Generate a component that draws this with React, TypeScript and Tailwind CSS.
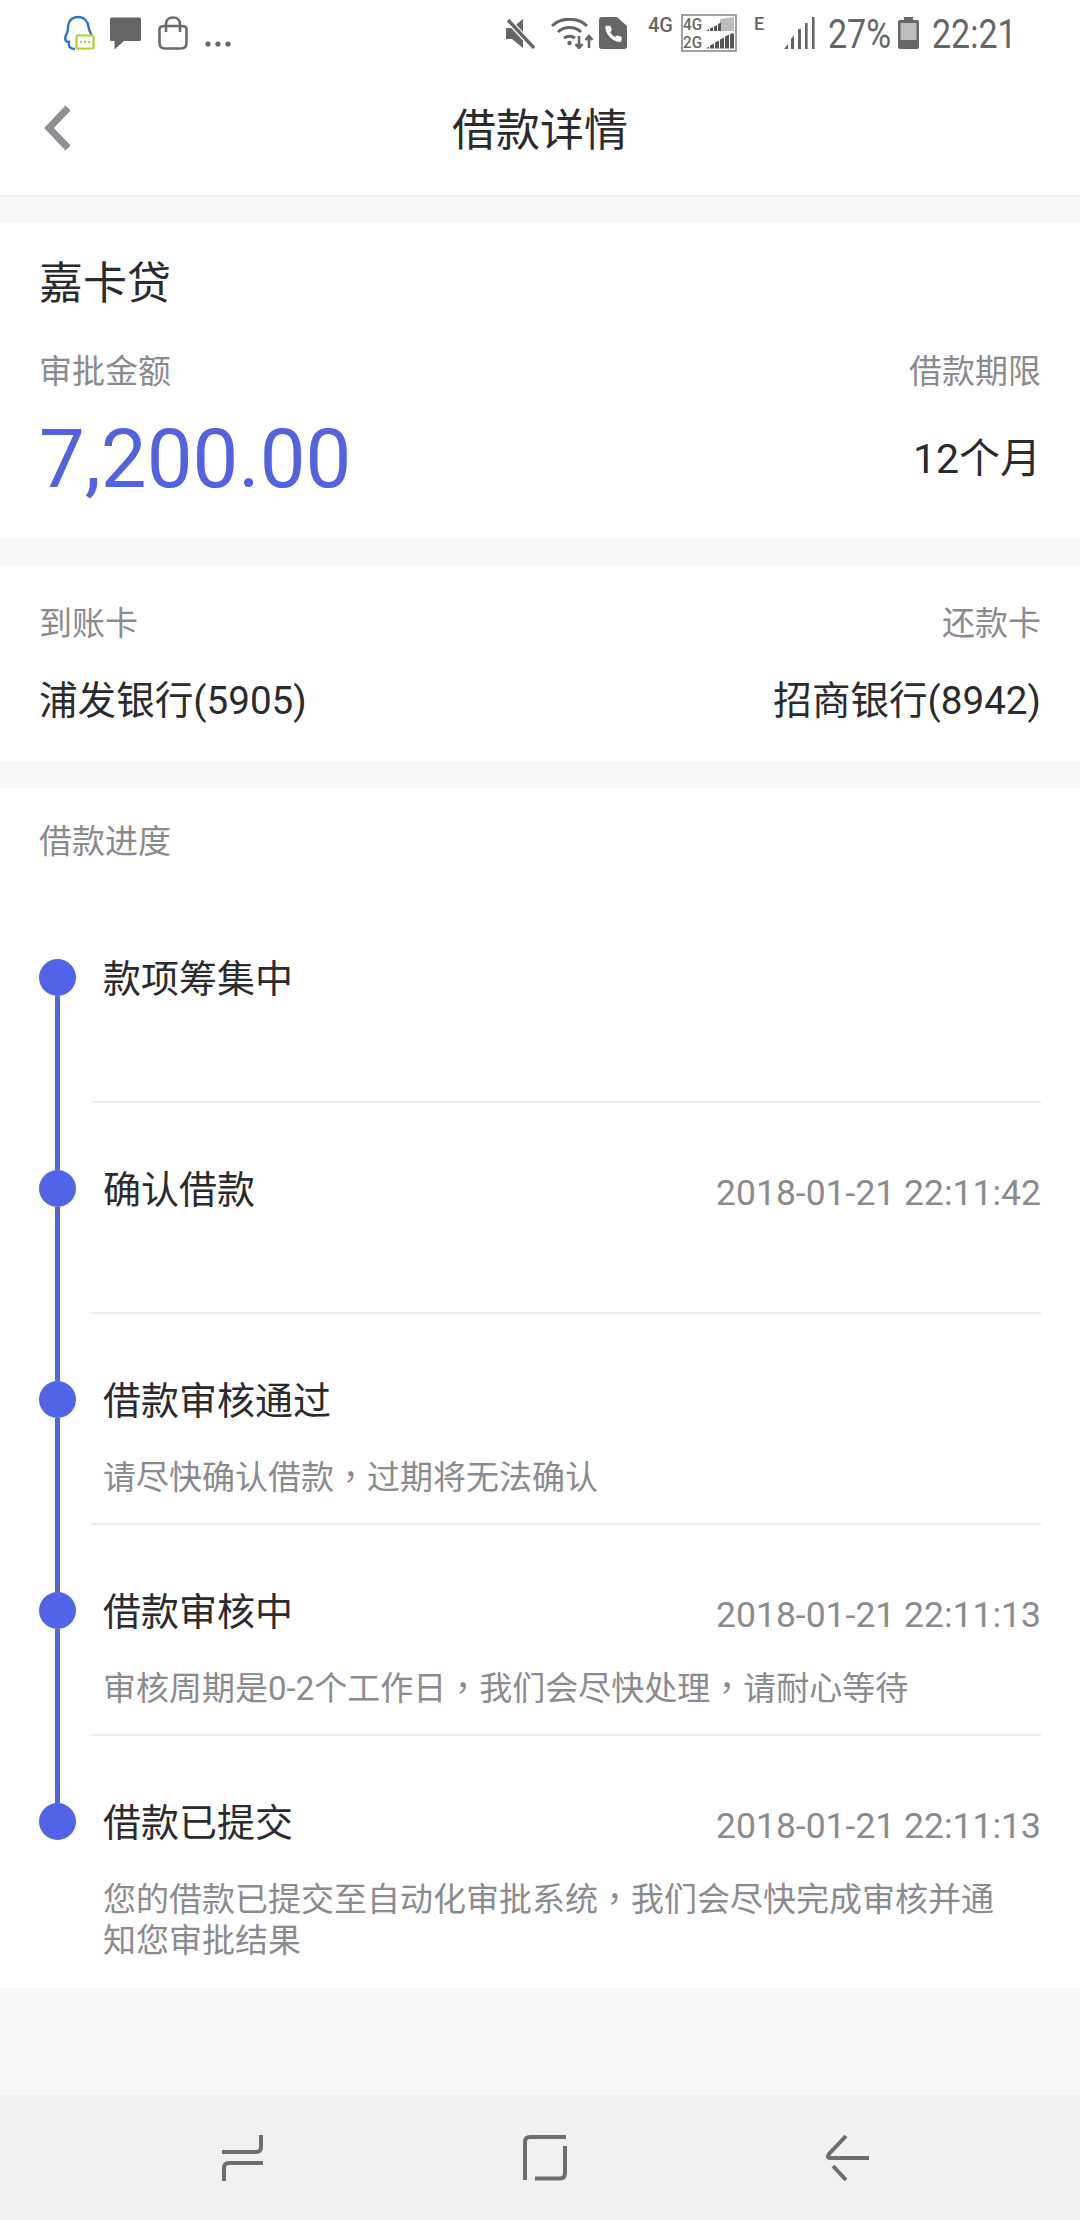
import React from "react";

const FONT = "font-['Roboto','Noto_Sans_CJK_SC',sans-serif]";

function QQ() {
  return (
    <svg width="32" height="36" viewBox="0 0 32 36" className="ml-[63px]" fill="none">
      <path d="M12 34C7 34 5 31 6 27C3 27 1 25 3 20C5 17 5 15 5 11C6 5 10 2 15 2C21 2 25 6 25.5 12C26 15 27 17 28.5 20" stroke="#2a74d8" strokeWidth="2.4" />
      <rect x="13.5" y="20.5" width="17" height="13" rx="1.5" fill="#fff" stroke="#b5cf2f" strokeWidth="2.2" />
      <path d="M19 33l2 2.5 2-2.5z" fill="#b5cf2f" />
      <circle cx="18" cy="27" r="1.2" fill="#b5cf2f" />
      <circle cx="22" cy="27" r="1.2" fill="#b5cf2f" />
      <circle cx="26" cy="27" r="1.2" fill="#b5cf2f" />
    </svg>
  );
}

function Message() {
  return (
    <svg width="31" height="33" viewBox="0 0 31 33" className="ml-[15px]">
      <path d="M1.5 0.5H29.5A1.5 1.5 0 0 1 31 2V22.5A1.5 1.5 0 0 1 29.5 24H14L4.5 32.5V24H1.5A1.5 1.5 0 0 1 0 22.5V2A1.5 1.5 0 0 1 1.5 0.5Z" fill="#666" />
    </svg>
  );
}

function Bag() {
  return (
    <svg width="30" height="34" viewBox="0 0 30 34" className="ml-[17px]" fill="none" stroke="#6a6a6a" strokeWidth="2.6">
      <path d="M8 10H6.5C3.5 10 1.5 11 1.5 13V27C1.5 30.5 3.5 32.5 7 32.5H23C26.5 32.5 28.5 30.5 28.5 27V13C28.5 11 26.5 10 23.5 10H22" />
      <path d="M8 16V8C8 4 11 1.5 15 1.5C19 1.5 22 4 22 8V16M8 10H22" />
    </svg>
  );
}

function Dots() {
  return (
    <svg width="26" height="6" viewBox="0 0 26 6" className="ml-[17px] mt-[22px]" fill="#666">
      <circle cx="3" cy="3" r="2.6" />
      <circle cx="13" cy="3" r="2.6" />
      <circle cx="23" cy="3" r="2.6" />
    </svg>
  );
}

function Mute() {
  return (
    <svg width="30" height="31" viewBox="0 0 30 31">
      <path d="M1 10H7L18 1V30L7 21H1Z" fill="#666" />
      <path d="M2 1L29 30" stroke="#fff" strokeWidth="6" />
      <path d="M3 2L29 30" stroke="#666" strokeWidth="3.4" />
    </svg>
  );
}

function Wifi() {
  return (
    <svg width="44" height="31" viewBox="0 0 44 31" className="ml-[16px]" fill="none" stroke="#666">
      <path d="M1 8C10 -1 27 -1 36 8" strokeWidth="3" />
      <path d="M7 14C13 8 24 8 30 14" strokeWidth="3" />
      <path d="M13 20C16 17.5 21 17.5 24 20" strokeWidth="3" />
      <circle cx="18.5" cy="25" r="2.2" fill="#666" stroke="none" />
      <path d="M28 18V30M24.5 26L28 30L31.5 26" strokeWidth="2.6" />
      <path d="M38 30V18M34.5 22L38 18L41.5 22" strokeWidth="2.6" />
    </svg>
  );
}

function CallSim() {
  return (
    <svg width="28" height="32" viewBox="0 0 28 32" className="ml-[4px]">
      <path d="M3 0H18L28 9V29A3 3 0 0 1 25 32H3A3 3 0 0 1 0 29V3A3 3 0 0 1 3 0Z" fill="#666" />
      <g transform="translate(4.5 7) scale(0.82)">
        <path d="M22 16.92v3a2 2 0 0 1-2.18 2 19.79 19.79 0 0 1-8.63-3.07 19.5 19.5 0 0 1-6-6 19.79 19.79 0 0 1-3.07-8.67A2 2 0 0 1 4.11 2h3a2 2 0 0 1 2 1.72 12.84 12.84 0 0 0 .7 2.81 2 2 0 0 1-.45 2.11L8.09 9.91a16 16 0 0 0 6 6l1.27-1.27a2 2 0 0 1 2.11-.45 12.84 12.84 0 0 0 2.81.7A2 2 0 0 1 22 16.92z" fill="#fff" />
      </g>
    </svg>
  );
}

function SimBox() {
  return (
    <svg width="56" height="38" viewBox="0 0 56 38" className="ml-[9px]">
      <rect x="1" y="1" width="54" height="36" fill="#fff" stroke="#8a8a8a" strokeWidth="1.6" />
      <text x="2" y="16" fontSize="17" fontWeight="500" fill="#666" fontFamily="Roboto" textLength="19" lengthAdjust="spacingAndGlyphs">4G</text>
      <text x="2" y="34" fontSize="17" fontWeight="500" fill="#666" fontFamily="Roboto" textLength="19" lengthAdjust="spacingAndGlyphs">2G</text>
      <path d="M25 17H39V5L53 3V17Z" fill="#bdbdbd" />
      <path d="M25 17L28 15V17ZM29 17V14.5L32 13V17ZM33 17V12.5L36 11V17ZM37 17V10L40 8.5V17Z" fill="#555" />
      <path d="M25 34.5L28 32.5V34.5ZM29 34.5V31.5L33 29.5V34.5ZM34 34.5V28.5L38 26.5V34.5ZM39 34.5V25.5L43 23.5V34.5ZM44 34.5V22.5L48 20.5V34.5ZM49 34.5V20L53 19V34.5Z" fill="#555" />
    </svg>
  );
}

function Signal() {
  return (
    <svg width="31" height="32" viewBox="0 0 31 32" className="ml-[21px]" fill="#666">
      <path d="M0 32L4 27V32Z" />
      <path d="M7 32V22L10 18V32Z" />
      <rect x="14" y="12" width="3" height="20" />
      <rect x="21" y="6" width="2.6" height="26" />
      <rect x="28" y="0" width="2.6" height="32" />
    </svg>
  );
}

function Battery() {
  return (
    <svg width="21" height="32" viewBox="0 0 21 32" className="ml-[10px]">
      <rect x="6" y="0" width="9" height="4" fill="#666" />
      <rect x="0" y="3" width="21" height="29" rx="2" fill="#666" />
      <rect x="2.5" y="6" width="16" height="17" fill="#bdbdbd" />
    </svg>
  );
}

function StatusBar() {
  return (
    <div className="flex h-[66px] items-center justify-between bg-white">
      <div className="flex items-center">
        <QQ />
        <Message />
        <Bag />
        <Dots />
      </div>
      <div className="flex items-center pr-[70px] text-[#666]">
        <Mute />
        <Wifi />
        <CallSim />
        <span className="ml-[21px] w-[24px] -translate-y-[8px] text-[20px] leading-[20px] font-medium whitespace-nowrap">4G</span>
        <SimBox />
        <span className="ml-[17px] w-[9px] -translate-y-[9px] text-[18px] leading-[20px] font-medium">E</span>
        <Signal />
        <span className="ml-[13px] mt-[3px] w-[60px] origin-left scale-x-[0.85] text-[40px] leading-[44px] whitespace-nowrap">27%</span>
        <Battery />
        <span className="ml-[13px] mt-[3px] w-[78px] origin-left scale-x-[0.85] text-[40px] leading-[44px] whitespace-nowrap">22:21</span>
      </div>
    </div>
  );
}

function Header() {
  return (
    <div className="grid h-[131px] grid-cols-[1fr_auto_1fr] items-center border-b-2 border-[#ededed] bg-white">
      <svg width="30" height="46" viewBox="0 0 30 46" className="ml-[43px] -mt-[6px]" fill="none">
        <path d="M25 3L6 23L25 43" stroke="#8e8e93" strokeWidth="7" />
      </svg>
      <div className="text-[44px] leading-[60px] text-[#2b2b2e]">借款详情</div>
      <div />
    </div>
  );
}

type Step = { title: string; time?: string; desc?: React.ReactNode };

const Comma = () => <span className="font-['Noto_Sans_CJK_TC']">，</span>;

const steps: Step[] = [
  { title: "款项筹集中" },
  { title: "确认借款", time: "2018-01-21 22:11:42" },
  { title: "借款审核通过", desc: <>请尽快确认借款<Comma />过期将无法确认</> },
  { title: "借款审核中", time: "2018-01-21 22:11:13", desc: <>审核周期是0-2个工作日<Comma />我们会尽快处理<Comma />请耐心等待</> },
  { title: "借款已提交", time: "2018-01-21 22:11:13", desc: <>您的借款已提交至自动化审批系统<Comma />我们会尽快完成审核并通<br />知您审批结果</> },
];

function TimelineRow({ step, first, last }: { step: Step; first: boolean; last: boolean }) {
  return (
    <div className="flex">
      <div className="flex w-[37px] shrink-0 flex-col items-center">
        <div className={`h-[67px] w-[5px] ${first ? "" : "bg-[#5266e0]"}`} />
        <div className="h-[37px] w-[37px] shrink-0 rounded-full bg-[#5163e6]" />
        <div className={`w-[5px] flex-1 ${last ? "" : "bg-[#5266e0]"}`} />
      </div>
      <div className={`ml-[16px] flex-1 pt-[61px] ${last ? "pb-[27px]" : "min-h-[211px] border-b-2 border-[#ededed]"}`}>
        <div className="flex items-center justify-between pl-[11px]">
          <span className="text-[38px] leading-[52px] text-[#2b2b2e]">{step.title}</span>
          {step.time && <span className="mt-[6px] text-[35.5px] leading-[46px] text-[#8b8b8f]">{step.time}</span>}
        </div>
        {step.desc && (
          <div className="mt-[28px] pl-[11px] pr-[40px] text-[33px] leading-[41px] text-[#8b8b8f]">{step.desc}</div>
        )}
      </div>
    </div>
  );
}

function NavBar() {
  return (
    <div className="flex h-[125px] items-center justify-center gap-[256px] bg-[#f1f1f1] pl-[9px]">
      <svg width="46" height="48" viewBox="0 0 46 48" fill="none" stroke="#6e6e6e" strokeWidth="4">
        <path d="M2 18H36C39.5 18 41 16 41 13V1" />
        <path d="M43 29H9C5.5 29 4 31 4 34V47" />
      </svg>
      <svg width="46" height="48" viewBox="0 0 46 48" fill="none" stroke="#6e6e6e" strokeWidth="4">
        <path d="M44 3H8C4.5 3 3 5 3 8V46" />
        <path d="M43 12V39C43 43 41 44.5 38 44.5H13" />
      </svg>
      <svg width="46" height="48" viewBox="0 0 46 48" fill="none" stroke="#6e6e6e" strokeWidth="4">
        <path d="M22 2L5 20C3 23 4 24 7 24H45" />
        <path d="M9 32L22 46" />
      </svg>
    </div>
  );
}

export default function App() {
  return (
    <div className={`${FONT} flex h-[2220px] w-[1080px] flex-col overflow-hidden bg-[#f7f7f7]`}>
      <StatusBar />
      <Header />

      <section className="mt-[26px] bg-white px-[39px] pt-[33px] pb-[35px]">
        <div className="text-[44px] leading-[56px] text-[#2b2b2e]">嘉卡贷</div>
        <div className="mt-[38px] flex justify-between">
          <div>
            <div className="text-[33px] leading-[44px] text-[#8b8b8f]">审批金额</div>
            <div className="mt-[20px] text-[81.5px] leading-[90px] text-[#5163e0]">7,200.00</div>
          </div>
          <div className="text-right">
            <div className="text-[33px] leading-[44px] text-[#8b8b8f]">借款期限</div>
            <div className="mt-[20px] text-[41px] leading-[90px] text-[#2b2b2e]">12个月</div>
          </div>
        </div>
      </section>

      <section className="mt-[26px] flex justify-between bg-white px-[39px] pt-[37px] pb-[34px]">
        <div>
          <div className="text-[33px] leading-[44px] text-[#8b8b8f]">到账卡</div>
          <div className="mt-[29px] text-[38.6px] leading-[52px] text-[#2b2b2e]">浦发银行(5905)</div>
        </div>
        <div className="text-right">
          <div className="text-[33px] leading-[44px] text-[#8b8b8f]">还款卡</div>
          <div className="mt-[29px] text-[38.6px] leading-[52px] text-[#2b2b2e]">招商银行(8942)</div>
        </div>
      </section>

      <section className="mt-[27px] bg-white px-[39px] pt-[32px]">
        <div className="text-[33px] leading-[44px] text-[#8b8b8f]">借款进度</div>
        <div className="mt-[28px]">
          {steps.map((s, i) => (
            <TimelineRow key={s.title} step={s} first={i === 0} last={i === steps.length - 1} />
          ))}
        </div>
      </section>

      <div className="flex-1" />
      <NavBar />
    </div>
  );
}
